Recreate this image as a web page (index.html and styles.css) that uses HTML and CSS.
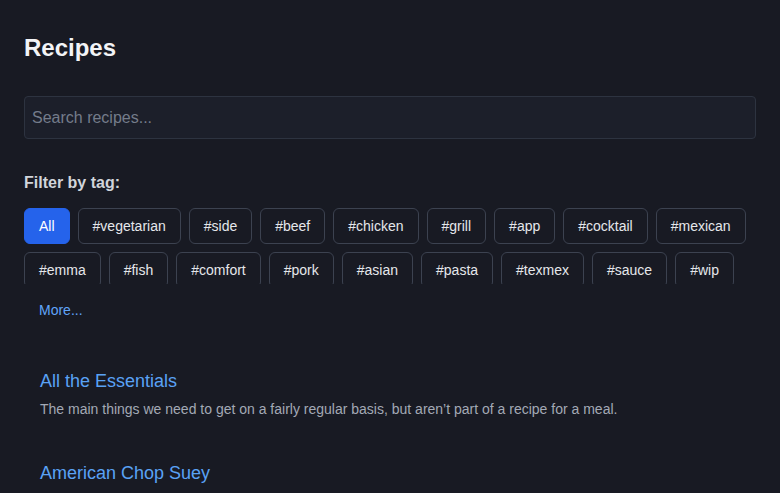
FILE: index.html
```html
<!DOCTYPE html>
<html lang="en">
<head>
<meta charset="utf-8">
<title>Recipes</title>
<link rel="stylesheet" href="styles.css">
</head>
<body>
<main class="page">
  <h1 class="title">Recipes</h1>
  <input class="search" type="text" placeholder="Search recipes...">
  <div class="filter-label">Filter by tag:</div>
  <div class="tags">
    <button class="tag active">All</button>
    <button class="tag">#vegetarian</button>
    <button class="tag">#side</button>
    <button class="tag">#beef</button>
    <button class="tag">#chicken</button>
    <button class="tag">#grill</button>
    <button class="tag">#app</button>
    <button class="tag">#cocktail</button>
    <button class="tag">#mexican</button>
    <button class="tag">#emma</button>
    <button class="tag">#fish</button>
    <button class="tag">#comfort</button>
    <button class="tag">#pork</button>
    <button class="tag">#asian</button>
    <button class="tag">#pasta</button>
    <button class="tag">#texmex</button>
    <button class="tag">#sauce</button>
    <button class="tag">#wip</button>
  </div>
  <button class="more">More...</button>
  <ul class="recipes">
    <li class="recipe">
      <a class="recipe-title" href="#">All the Essentials</a>
      <p class="recipe-desc">The main things we need to get on a fairly regular basis, but aren’t part of a recipe for a meal.</p>
    </li>
    <li class="recipe">
      <a class="recipe-title" href="#">American Chop Suey</a>
    </li>
  </ul>
</main>
</body>
</html>
```

FILE: styles.css
```css
* { box-sizing: border-box; }

html, body {
  margin: 0;
  background: #181a23;
}

body {
  font-family: "Liberation Sans", Arial, sans-serif;
  color: #e5e7eb;
}

.page {
  padding: 24px;
}

.title {
  margin: 10px 0 34px;
  font-size: 24px;
  font-weight: 700;
  line-height: normal;
  color: #f3f4f6;
}

.search {
  display: block;
  width: 100%;
  height: 43px;
  padding: 0 7px;
  border: 1px solid #2d3340;
  border-radius: 4px;
  background: #1c1f2a;
  color: #e5e7eb;
  font-family: inherit;
  font-size: 16px;
  outline: none;
}

.search::placeholder {
  color: #747c8a;
}

.filter-label {
  margin-top: 35px;
  font-size: 16px;
  font-weight: 700;
  color: #d1d5db;
}

.tags {
  display: flex;
  flex-wrap: wrap;
  gap: 8px;
  margin-top: 16px;
  max-height: 76px;
  overflow: hidden;
}

.tag {
  height: 36px;
  padding: 0 14px;
  border: 1px solid #3c4250;
  border-radius: 6px;
  background: transparent;
  color: #e5e7eb;
  font-family: inherit;
  font-size: 14px;
  line-height: 1;
}

.tag.active {
  background: #2563eb;
  border-color: #2563eb;
  color: #ffffff;
}

.more {
  display: block;
  height: 36px;
  margin-top: 8px;
  padding: 0 14px;
  border: 1px solid transparent;
  background: transparent;
  color: #60a5fa;
  font-family: inherit;
  font-size: 14px;
}

.recipes {
  list-style: none;
  margin: 27px 0 0;
  padding: 0;
  display: flex;
  flex-direction: column;
  gap: 14px;
}

.recipe {
  padding: 16px;
}

.recipe-title {
  display: block;
  font-size: 18px;
  line-height: normal;
  color: #5aa2f5;
  text-decoration: none;
  margin-bottom: 9px;
}

.recipe-desc {
  margin: 0;
  font-size: 14px;
  line-height: normal;
  color: #a3a9b5;
}
```
